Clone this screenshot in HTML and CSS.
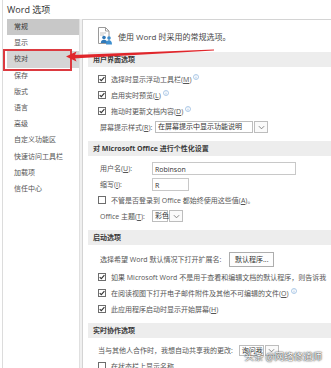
FILE: index.html
```html
<!DOCTYPE html>
<html lang="zh-CN">
<head>
    <meta charset="UTF-8">
    <title>Word 选项</title>
    <link rel="stylesheet" href="styles.css">
</head>
<body>
<div class="dialog">
    <div class="title">Word 选项</div>
    <div class="main">
        <ul class="nav">
            <li class="item active">常规</li>
            <li class="item">显示</li>
            <li class="item hover">校对<span class="mark"></span></li>
            <li class="item">保存</li>
            <li class="item">版式</li>
            <li class="item">语言</li>
            <li class="item">高级</li>
            <li class="item">自定义功能区</li>
            <li class="item">快速访问工具栏</li>
            <li class="item">加载项</li>
            <li class="item">信任中心</li>
        </ul>
        <div class="content">
            <div class="intro">
                <svg class="doc-icon" viewBox="0 0 17 18" width="17" height="18">
                    <path d="M1.5 0.5 H8.5 L12 4 V16.5 H1.5 Z" fill="#fff" stroke="#9a9a9a"/>
                    <path d="M8.5 0.5 V4 H12" fill="none" stroke="#9a9a9a"/>
                    <path d="M3 6 H9 M3 8 H7" stroke="#c4c4c4"/>
                    <circle cx="7" cy="10.5" r="1.8" fill="#2f78b8"/>
                    <path d="M3.8 16 Q4 12.8 7 12.8 Q10 12.8 10.2 16 Z" fill="#2f78b8"/>
                    <circle cx="12" cy="11" r="1.8" fill="#3e8fcf"/>
                    <path d="M9 17.5 Q9.2 13.3 12 13.3 Q14.8 13.3 15 17.5 Z" fill="#3e8fcf"/>
                </svg>
                <span>使用 Word 时采用的常规选项。</span>
            </div>

            <div class="section">
                <div class="sec-head">用户界面选项</div>
                <div class="row">
                    <svg class="cb" viewBox="0 0 8 8"><rect x="0.5" y="0.5" width="7" height="7"/><path d="M1.7 4.1 L3.3 5.7 L6.4 2.1"/></svg>
                    选择时显示浮动工具栏(<u>M</u>)
                    <svg class="info" viewBox="0 0 6 6"><circle cx="3" cy="3" r="2.5"/><path d="M3 2.6 V4.6"/><circle class="dot" cx="3" cy="1.6" r="0.4"/></svg>
                </div>
                <div class="row">
                    <svg class="cb" viewBox="0 0 8 8"><rect x="0.5" y="0.5" width="7" height="7"/><path d="M1.7 4.1 L3.3 5.7 L6.4 2.1"/></svg>
                    启用实时预览(<u>L</u>)
                    <svg class="info" viewBox="0 0 6 6"><circle cx="3" cy="3" r="2.5"/><path d="M3 2.6 V4.6"/><circle class="dot" cx="3" cy="1.6" r="0.4"/></svg>
                </div>
                <div class="row">
                    <svg class="cb" viewBox="0 0 8 8"><rect x="0.5" y="0.5" width="7" height="7"/><path d="M1.7 4.1 L3.3 5.7 L6.4 2.1"/></svg>
                    拖动时更新文档内容(<u>D</u>)
                    <svg class="info" viewBox="0 0 6 6"><circle cx="3" cy="3" r="2.5"/><path d="M3 2.6 V4.6"/><circle class="dot" cx="3" cy="1.6" r="0.4"/></svg>
                </div>
                <div class="row">
                    <span class="label wide">屏幕提示样式(<u>R</u>):</span>
                    <span class="select tip-select">
                        <span class="value">在屏幕提示中显示功能说明</span>
                        <span class="drop"><svg viewBox="0 0 8 5"><path d="M1 1 L4 4 L7 1"/></svg></span>
                    </span>
                </div>
            </div>

            <div class="section">
                <div class="sec-head">对 Microsoft Office 进行个性化设置</div>
                <div class="row">
                    <span class="label">用户名(<u>U</u>):</span>
                    <span class="input name">Robinson</span>
                </div>
                <div class="row">
                    <span class="label">缩写(<u>I</u>):</span>
                    <span class="input initials">R</span>
                </div>
                <div class="row">
                    <svg class="cb" viewBox="0 0 8 8"><rect x="0.5" y="0.5" width="7" height="7"/></svg>
                    不管是否登录到 Office 都始终使用这些值(<u>A</u>)。
                </div>
                <div class="row">
                    <span class="label short">Office 主题(<u>T</u>):</span>
                    <span class="select theme-select">
                        <span class="value">彩色</span>
                        <span class="drop"><svg viewBox="0 0 8 5"><path d="M1 1 L4 4 L7 1"/></svg></span>
                    </span>
                </div>
            </div>

            <div class="section">
                <div class="sec-head">启动选项</div>
                <div class="row tall">
                    选择希望 Word 默认情况下打开扩展名:
                    <span class="button">默认程序...</span>
                </div>
                <div class="row">
                    <svg class="cb" viewBox="0 0 8 8"><rect x="0.5" y="0.5" width="7" height="7"/><path d="M1.7 4.1 L3.3 5.7 L6.4 2.1"/></svg>
                    如果 Microsoft Word 不是用于查看和编辑文档的默认程序，则告诉我
                </div>
                <div class="row">
                    <svg class="cb" viewBox="0 0 8 8"><rect x="0.5" y="0.5" width="7" height="7"/><path d="M1.7 4.1 L3.3 5.7 L6.4 2.1"/></svg>
                    在阅读视图下打开电子邮件附件及其他不可编辑的文件(<u>O</u>)
                    <svg class="info" viewBox="0 0 6 6"><circle cx="3" cy="3" r="2.5"/><path d="M3 2.6 V4.6"/><circle class="dot" cx="3" cy="1.6" r="0.4"/></svg>
                </div>
                <div class="row">
                    <svg class="cb" viewBox="0 0 8 8"><rect x="0.5" y="0.5" width="7" height="7"/><path d="M1.7 4.1 L3.3 5.7 L6.4 2.1"/></svg>
                    此应用程序启动时显示开始屏幕(<u>H</u>)
                </div>
            </div>

            <div class="section">
                <div class="sec-head">实时协作选项</div>
                <div class="row">
                    当与其他人合作时，我想自动共享我的更改:
                    <span class="select share-select">
                        <span class="value">询问我</span>
                        <span class="drop"><svg viewBox="0 0 8 5"><path d="M1 1 L4 4 L7 1"/></svg></span>
                    </span>
                </div>
                <div class="row">
                    <svg class="cb" viewBox="0 0 8 8"><rect x="0.5" y="0.5" width="7" height="7"/></svg>
                    在状态栏上显示名称
                </div>
            </div>
        </div>
    </div>

    <!-- red annotation arrow pointing at the nav item -->
    <svg class="arrow" viewBox="0 0 331 368" width="331" height="368">
        <polygon points="77,55 218,49.4 218,50.4 77,58.6" fill="#e0262b"/>
        <polygon points="70,56.6 80.5,51.6 78.5,56.6 80.5,61.6" fill="#e0262b"/>
    </svg>

    <div class="watermark">头条 @网络修道师</div>
</div>
</body>
</html>
```

FILE: styles.css
```css
body, html {
    margin: 0;
    padding: 0;
    height: 100%;
    background: #fff;
}
.dialog {
    position: relative;
    height: 100%;
    margin-left: 2px;
    border-left: 1px solid #dcdcdc;
    padding-left: 4px;
    display: flex;
    flex-direction: column;
    overflow: hidden;
    font-family: "Open Sans", "Noto Sans CJK SC", sans-serif;
    font-size: 7px;
    color: #555;
}
.title {
    height: 19px;
    line-height: 19px;
    font-size: 9px;
    color: #333;
    flex-shrink: 0;
}
.main {
    flex: 1;
    display: flex;
    background: #f0f0f0;
    min-height: 0;
}
.nav {
    list-style: none;
    margin: 0;
    padding: 0;
    width: 72px;
    background: #fff;
    border-right: 1px solid #e0e0e0;
    margin-right: 2px;
}
.item {
    position: relative;
    height: 16.2px;
    line-height: 16.2px;
    padding-left: 7px;
    color: #555;
}
.item.active {
    background: #c8c8c8;
    color: #333;
}
.item.hover {
    background: #d5d5d5;
    color: #444;
}
.mark {
    position: absolute;
    left: -4px;
    top: -2.4px;
    width: 69px;
    height: 22px;
    box-sizing: border-box;
    border: 2px solid #dc3a40;
}
.content {
    flex: 1;
    min-width: 0;
    overflow: hidden;
    background: #fff;
    border-left: 1px solid #d4d4d4;
    border-top: 1px solid #d4d4d4;
    padding-left: 5px;
}
.intro {
    height: 32px;
    display: flex;
    align-items: center;
    padding-left: 9px;
    font-size: 8px;
    color: #444;
    white-space: nowrap;
}
.doc-icon {
    margin-right: 4px;
    margin-top: -1px;
}
.section {
    margin-bottom: 6px;
}
.sec-head {
    height: 15px;
    line-height: 15px;
    padding-left: 5px;
    background: #ededed;
    font-weight: bold;
    color: #3a3a3a;
    margin-bottom: 4px;
    white-space: nowrap;
}
.row {
    height: 16px;
    display: flex;
    align-items: center;
    padding-left: 10px;
    white-space: nowrap;
    color: #555;
}
.row.tall {
    height: 20px;
    padding-left: 12px;
}
.row u {
    text-decoration: underline;
}
.cb {
    width: 8px;
    height: 8px;
    flex-shrink: 0;
    margin-right: 5px;
}
.cb rect {
    fill: #fff;
    stroke: #6d6d6d;
    stroke-width: 1;
}
.cb path {
    fill: none;
    stroke: #333;
    stroke-width: 1.1;
}
.info {
    width: 6px;
    height: 6px;
    margin-left: 2px;
    margin-top: -5px;
}
.info circle {
    fill: none;
    stroke: #8db3dc;
    stroke-width: 0.7;
}
.info path {
    stroke: #8db3dc;
    stroke-width: 0.7;
}
.info .dot {
    fill: #8db3dc;
    stroke: none;
}
.label {
    width: 52px;
    padding-left: 2px;
    flex-shrink: 0;
}
.label.wide {
    width: 55px;
}
.label.short {
    width: 53px;
}
.input {
    height: 13px;
    line-height: 13px;
    box-sizing: border-box;
    border: 1px solid #c8c8c8;
    padding-left: 2px;
    color: #333;
}
.input.name {
    width: 144px;
}
.input.initials {
    width: 37px;
}
.select {
    display: flex;
    align-items: stretch;
    height: 12px;
}
.select .value {
    border: 1px solid #bdbdbd;
    line-height: 10px;
    padding-left: 2px;
    color: #333;
    box-sizing: border-box;
}
.select .drop {
    width: 14px;
    margin-left: 1px;
    border: 1px solid #bdbdbd;
    box-sizing: border-box;
    display: flex;
    align-items: center;
    justify-content: center;
    background: #fafafa;
}
.select .drop svg {
    width: 7px;
    height: 5px;
}
.select .drop path {
    fill: none;
    stroke: #777;
    stroke-width: 1;
}
.tip-select .value {
    width: 98px;
}
.theme-select .value {
    width: 16px;
}
.theme-select {
    margin-left: -1px;
}
.share-select {
    margin-left: 6px;
    height: 11px;
}
.share-select .value {
    width: 25px;
    line-height: 9px;
}
.button {
    margin-left: 8px;
    height: 15px;
    line-height: 13px;
    box-sizing: border-box;
    width: 45px;
    text-align: center;
    border: 1px solid #adadad;
    background: #fdfdfd;
    color: #333;
}
.arrow {
    position: absolute;
    left: -7px;
    top: 0;
    pointer-events: none;
}
.watermark {
    position: absolute;
    right: 9px;
    bottom: 5px;
    font-size: 9.5px;
    color: #fff;
    text-shadow: 0 0 2px #333, 0 0 1px #222;
    font-family: "Noto Sans CJK SC", sans-serif;
}
```
